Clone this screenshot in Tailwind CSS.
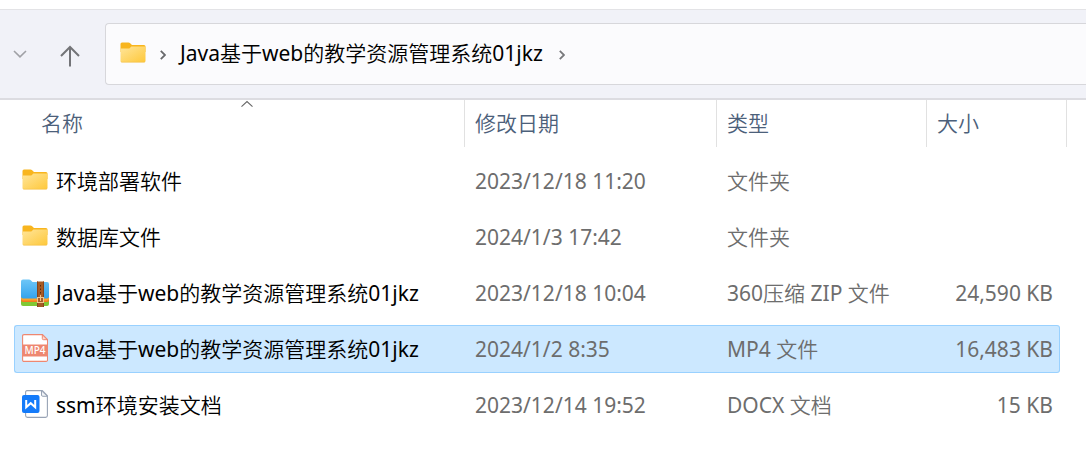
<!DOCTYPE html>
<html lang="zh-CN">

<head>
  <meta charset="UTF-8">
  <meta name="viewport" content="width=device-width, initial-scale=1.0">
  <title>Java基于web的教学资源管理系统01jkz</title>
  <script src="https://cdn.jsdelivr.net/npm/@tailwindcss/browser@4"></script>
</head>

<body class="bg-white font-['Noto_Sans','Noto_Sans_CJK_SC_DemiLight','Noto_Sans_CJK_SC',sans-serif] text-[21px] leading-7 text-black">

  <!-- Shared folder icon -->
  <svg class="absolute h-0 w-0" aria-hidden="true">
    <defs>
      <linearGradient id="folder-front" x1="0" y1="0" x2="1" y2="1">
        <stop offset="0" stop-color="#ffe59a" />
        <stop offset="1" stop-color="#fec83a" />
      </linearGradient>
    </defs>
    <symbol id="folder" viewBox="0 0 26 21">
      <path d="M.5 2A1.500 1.500 0 0 1 2 .5h6.500c.6 0 1 .2 1.400.6L12 3h12a1.500 1.500 0 0 1 1.500 1.500V10H.5z" fill="#f8b51e" />
      <path d="M.5 6.500h8c.6 0 1-.2 1.400-.6L11.300 4.600h13.200c.6 0 1 .4 1 1V18.800c0 .8-.6 1.400-1.400 1.400H1.900c-.8 0-1.400-.6-1.400-1.400z" fill="url(#folder-front)" />
      <path d="M.8 19.600q.5.600 1.200.600h22q.7 0 1.200-.6" fill="none" stroke="#f3bd43" stroke-width=".6" />
    </symbol>
  </svg>

  <!-- Navigation bar -->
  <header class="mt-[9px] flex h-[91px] items-center border-t border-b-2 border-t-[#e3e3e6] border-b-[#dcdce1] bg-[#f1f2f8]">
    <button type="button" aria-label="最近浏览的位置" class="ml-3 flex h-8 w-4 items-center justify-center">
      <svg class="h-2 w-3.5" viewBox="0 0 14 8" fill="none" stroke="#a0a1a6" stroke-width="1.600"><path d="M1 1l6 5.800L13 1" /></svg>
    </button>
    <button type="button" aria-label="上移" class="ml-8 flex h-8 w-5 items-center justify-center">
      <svg class="mt-1 h-[22px] w-5 shrink-0" viewBox="0 0 20 22" fill="none" stroke="#737478" stroke-width="2"><path d="M10 21.500V2M1 11l9-9 9 9" /></svg>
    </button>
    <nav aria-label="地址" class="ml-[25px] flex h-[62px] flex-1 items-center rounded-l-[4px] border border-r-0 border-[#d7d7db] bg-[#fbfbfd] pl-3.5">
      <svg class="mb-1 h-[21px] w-[26px] shrink-0"><use href="#folder" /></svg>
      <svg class="ml-3.5 mt-0.5 h-2.5 w-1.5 shrink-0" viewBox="0 0 6 10" fill="none" stroke="#68696c" stroke-width="1.800"><path d="M.8.8L5 5 .8 9.200" /></svg>
      <a href="#" class="ml-3.5 pb-0.5 whitespace-nowrap">Java基于web的教学资源管理系统01jkz</a>
      <svg class="ml-4 mt-0.5 h-2.5 w-1.5 shrink-0" viewBox="0 0 6 10" fill="none" stroke="#77787b" stroke-width="1.800"><path d="M.8.8L5 5 .8 9.200" /></svg>
    </nav>
  </header>

  <!-- File list -->
  <main class="pr-[19px] pl-3.5">
    <table class="w-full table-fixed border-separate border-spacing-0 whitespace-nowrap text-left">
      <colgroup>
        <col>
        <col class="w-[252px]">
        <col class="w-[210px]">
        <col class="w-[140px]">
      </colgroup>
      <thead class="text-[#4c607a]">
        <tr>
          <th scope="col" aria-sort="ascending" class="h-[53px] p-0 align-top font-normal">
            <div class="relative flex h-[47px] items-center border-r border-[#e1e1e1] pb-0.5 pl-[27px]">
              名称
              <svg class="absolute top-0 left-[227px] h-2 w-3" viewBox="0 0 12 8" fill="none" stroke="#666" stroke-width="1.100"><path d="M.5 6.700L6 1.500l5.500 5.200" /></svg>
            </div>
          </th>
          <th scope="col" class="p-0 align-top font-normal"><div class="flex h-[47px] items-center border-r border-[#e1e1e1] pb-0.5 pl-2.5">修改日期</div></th>
          <th scope="col" class="p-0 align-top font-normal"><div class="flex h-[47px] items-center border-r border-[#e1e1e1] pb-0.5 pl-2.5">类型</div></th>
          <th scope="col" class="p-0 align-top font-normal"><div class="flex h-[47px] items-center border-r border-[#e1e1e1] pb-0.5 pl-2.5">大小</div></th>
        </tr>
      </thead>
      <tbody class="text-[#6d6d6d]">
        <tr>
          <td class="h-14 p-0 text-black">
            <div class="flex h-12 items-center pl-2">
              <svg class="mb-1 h-[21px] w-[26px] shrink-0"><use href="#folder" /></svg>
              <span class="ml-2">环境部署软件</span>
            </div>
          </td>
          <td class="p-0 pl-2.5">2023/12/18 11:20</td>
          <td class="p-0 pl-2.5">文件夹</td>
          <td class="p-0"></td>
        </tr>
        <tr>
          <td class="h-14 p-0 text-black">
            <div class="flex h-12 items-center pl-2">
              <svg class="mb-1 h-[21px] w-[26px] shrink-0"><use href="#folder" /></svg>
              <span class="ml-2">数据库文件</span>
            </div>
          </td>
          <td class="p-0 pl-2.5">2024/1/3 17:42</td>
          <td class="p-0 pl-2.5">文件夹</td>
          <td class="p-0"></td>
        </tr>
        <tr>
          <td class="h-14 p-0 text-black">
            <div class="flex h-12 items-center pl-[7px]">
              <svg class="h-7 w-7 shrink-0" viewBox="0 0 28 28">
                <defs>
                  <linearGradient id="zip-blue" x1="0" y1="0" x2="0" y2="1">
                    <stop offset="0" stop-color="#6ec6f7" />
                    <stop offset="1" stop-color="#34a3ed" />
                  </linearGradient>
                </defs>
                <path d="M0 18h28v7a2 2 0 0 1-2 2H2a2 2 0 0 1-2-2z" fill="#80c834" />
                <path d="M0 17h28v4a2 2 0 0 1-2 2H2a2 2 0 0 1-2-2z" fill="#f47b1c" />
                <path d="M0 17h28v2.500a2 2 0 0 1-2 2H2a2 2 0 0 1-2-2z" fill="#fba42c" />
                <path d="M0 2.500Q0 .5 2 .5h6q1 0 1.800.7L11.500 3H26q2 0 2 2v12.500q0 2-2 2H2q-2 0-2-2z" fill="url(#zip-blue)" />
                <path d="M16 2.500h7V28h-7z" fill="#a65a25" />
                <path d="M16 2.500h1V28h-1zM22 2.500h1V28h-1z" fill="#87451d" />
                <path d="M19 6h1v1.500h-1zM19 9.500h1V11h-1zM19 13h1v1.500h-1z" fill="#55290e" />
                <path d="M16.500 18.500h6v5h-6zM19.500 16v6" fill="none" stroke="#f0c58b" stroke-width="1.100" />
              </svg>
              <span class="ml-[7px]">Java基于web的教学资源管理系统01jkz</span>
            </div>
          </td>
          <td class="p-0 pl-2.5">2023/12/18 10:04</td>
          <td class="p-0 pl-2.5">360压缩 ZIP 文件</td>
          <td class="p-0 pr-3.5 text-right">24,590 KB</td>
        </tr>
        <tr aria-selected="true">
          <td class="h-14 p-0 text-black">
            <div class="flex h-12 items-center rounded-l-[3px] border border-r-0 border-[#99d1ff] bg-[#cce8ff] pl-[7px]">
              <svg class="mb-0.5 h-7 w-[26px] shrink-0" viewBox="0 0 26 28">
                <path d="M2 .6h18.500l5 5V26q0 1.400-1.400 1.400H2Q.6 27.400.6 26V2Q.6.6 2 .6z" fill="#fff" stroke="#ee8770" stroke-width="1.100" />
                <path d="M20.300.8v3.700q0 1.200 1.200 1.200h3.800z" fill="#fcd8ce" stroke="#ee8770" />
                <path d="M.5 10.500h25v12H.5z" fill="#ee8770" />
                <text x="13" y="20" text-anchor="middle" font-family="Noto Sans, sans-serif" font-size="10" font-weight="500" fill="#fff">MP4</text>
              </svg>
              <span class="ml-2">Java基于web的教学资源管理系统01jkz</span>
            </div>
          </td>
          <td class="p-0"><div class="flex h-12 items-center border-y border-[#99d1ff] bg-[#cce8ff] pl-2.5">2024/1/2 8:35</div></td>
          <td class="p-0"><div class="flex h-12 items-center border-y border-[#99d1ff] bg-[#cce8ff] pl-2.5">MP4 文件</div></td>
          <td class="p-0"><div class="mr-[7px] flex h-12 items-center justify-end rounded-r-[3px] border border-l-0 border-[#99d1ff] bg-[#cce8ff] pr-1.5">16,483 KB</div></td>
        </tr>
        <tr>
          <td class="h-14 p-0 text-black">
            <div class="flex h-12 items-center pl-2">
              <svg class="mb-0.5 h-7 w-[26px] shrink-0" viewBox="0 0 26 28">
                <path d="M5 .6h15.300l5.100 5.200v19.700q0 1.900-1.900 1.900H5.500q-1.900 0-1.900-1.900V2.300Q3.600.6 5 .6z" fill="#fff" stroke="#98a3b5" stroke-width="1.100" />
                <path d="M19.500.8v4.200q0 1.300 1.300 1.300h4.500z" fill="#f2f4f7" stroke="#98a3b5" />
                <rect y="5" width="17.500" height="18" rx="2" fill="#147bfa" />
                <path d="M4.200 10v7.300l4.500-4.100 4.500 4.100V10" fill="none" stroke="#fff" stroke-width="2" />
              </svg>
              <span class="ml-2">ssm环境安装文档</span>
            </div>
          </td>
          <td class="p-0 pl-2.5">2023/12/14 19:52</td>
          <td class="p-0 pl-2.5">DOCX 文档</td>
          <td class="p-0 pr-3.5 text-right">15 KB</td>
        </tr>
      </tbody>
    </table>
  </main>

</body>

</html>
